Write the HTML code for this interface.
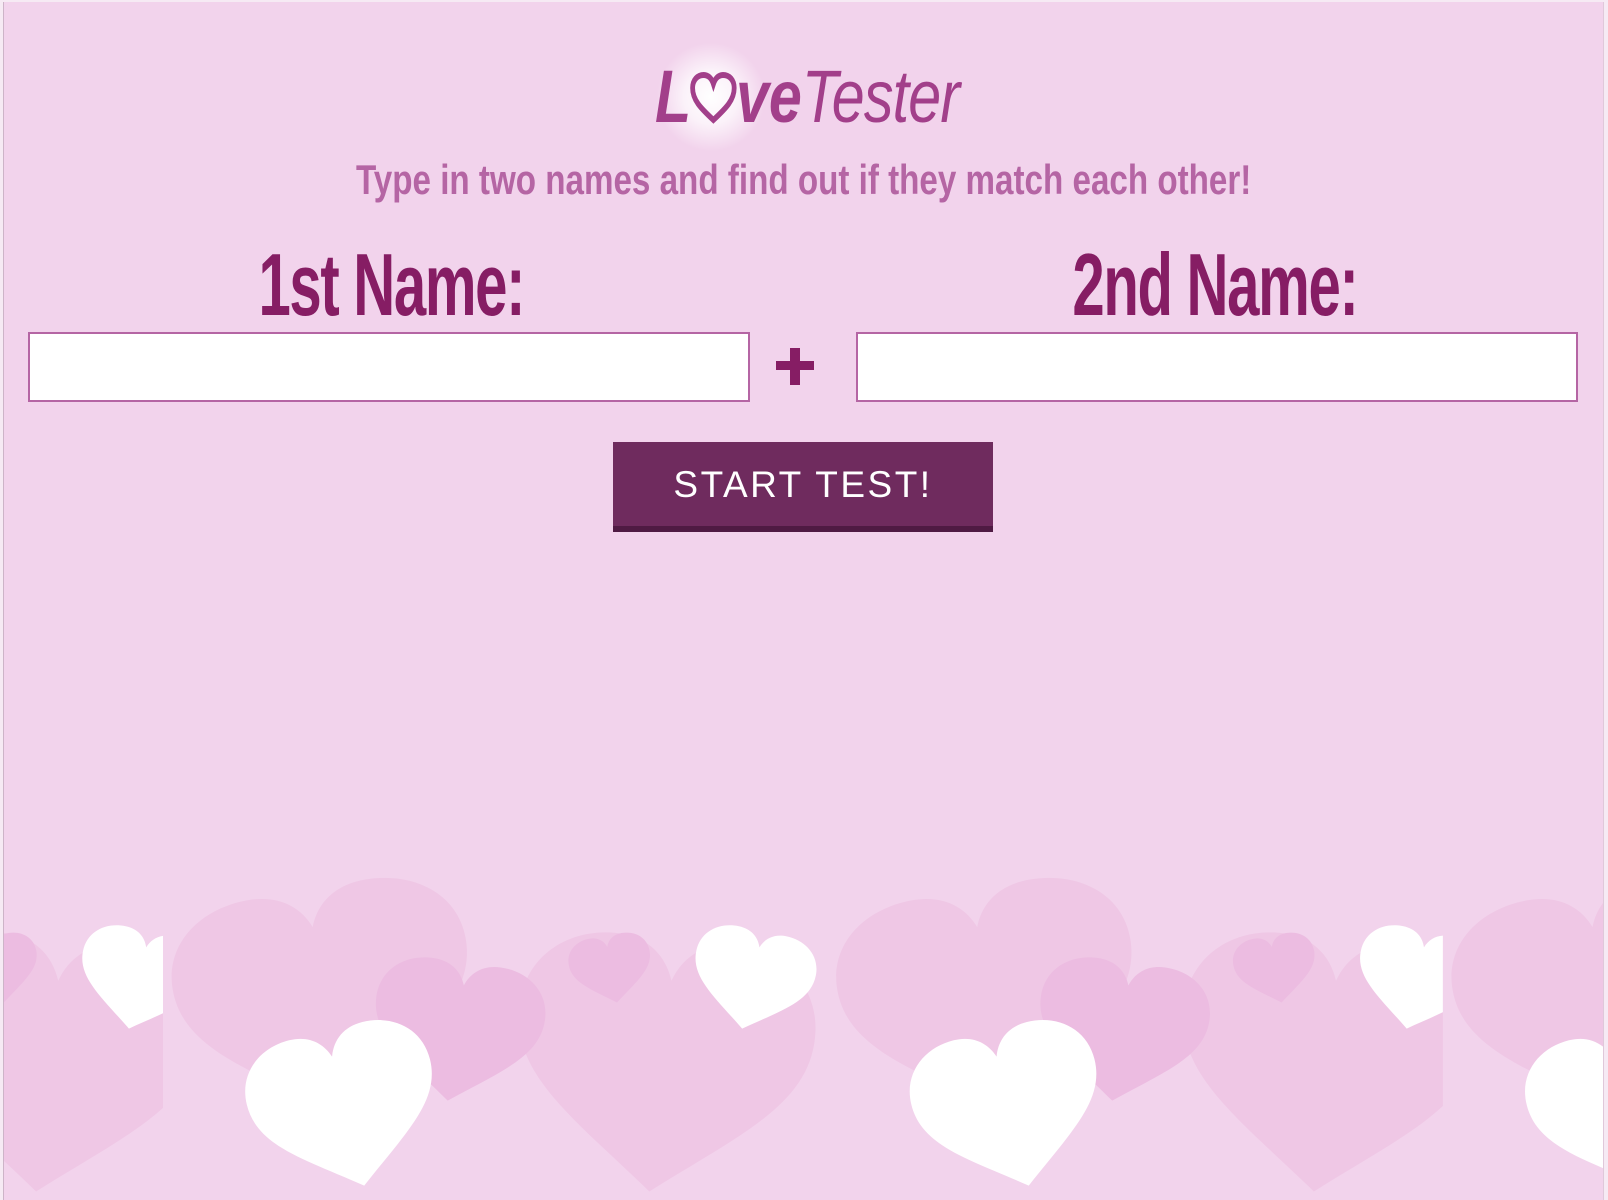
<!DOCTYPE html>
<html><head><meta charset="utf-8">
<style>
html,body{margin:0;padding:0;width:1608px;height:1200px;overflow:hidden;background:#f6eaf4}
#pg{position:absolute;left:3px;top:2px;width:1599px;height:1198px;background:#f2d3ec;border-left:1px solid #cdb4c8;border-right:1px solid #e0c8da;overflow:hidden}
.logo{position:absolute;left:651px;top:52px;height:80px;font-family:"Liberation Sans",sans-serif;color:#a23f8a;font-size:74px;white-space:nowrap;transform:scaleX(0.8);transform-origin:0 0}
.glow{position:absolute;left:652px;top:40px;width:110px;height:110px;border-radius:50%;background:radial-gradient(circle,#ffffff 0%,rgba(255,255,255,.7) 35%,rgba(255,255,255,0) 70%)}
.sub{position:absolute;left:0;width:1599px;top:154px;text-align:center;font-family:"Liberation Sans",sans-serif;font-weight:bold;color:#b565a4;font-size:42px}
.sub span{display:inline-block;transform:scaleX(0.79);white-space:nowrap}
.lab{position:absolute;top:232px;width:800px;text-align:center;font-family:"Liberation Sans",sans-serif;font-weight:bold;color:#861d64;font-size:88px;letter-spacing:-2px}
.lab span{display:inline-block;transform:scaleX(0.66);white-space:nowrap}
.inp{position:absolute;top:330px;height:66px;background:#fff;border:2px solid #b565a4}
.plus{position:absolute;left:771px;top:344px;width:40px;height:40px}
.btn{position:absolute;left:609px;top:440px;width:380px;height:84px;background:#6f2b5e;border-bottom:6px solid #4f1a43;color:#fff;font-family:"Liberation Sans",sans-serif;font-size:37px;letter-spacing:2.5px;text-align:center;line-height:86px}
svg.h{position:absolute;left:-3px;top:-2px}
</style></head><body>
<div id="pg">
<svg class="h" width="1608" height="1200" viewBox="0 0 1568 1170" preserveAspectRatio="none">
<defs>
<path id="hp" d="M50 97 C22 72 0 58 0 32 C0 12 14 0 30 0 C40 0 47 6 50 16 C53 6 60 0 70 0 C86 0 100 12 100 32 C100 58 78 72 50 97Z"/>
<g id="tile">
<use href="#hp" fill="#efc7e5" transform="translate(172 866) rotate(-10 145 112) scale(2.9 2.3)"/>
<use href="#hp" fill="#efc7e5" transform="translate(500 915) rotate(6 145 125) scale(2.9 2.55)"/>
<use href="#hp" fill="#ecbce1" transform="translate(362 938) rotate(8 83 68) scale(1.66 1.4)"/>
<use href="#hp" fill="#ecbce1" transform="translate(555 912) rotate(-10 40 33) scale(0.8 0.68)"/>
<use href="#hp" fill="#ffffff" transform="translate(673 907) rotate(12 60 50) scale(1.19 1.0)"/>
<use href="#hp" fill="#ffffff" transform="translate(244 1003) rotate(-14 92 80) scale(1.84 1.6)"/>
</g>
<clipPath id="cl"><rect x="0" y="0" width="158" height="1170"/></clipPath>
<clipPath id="cm"><rect x="158" y="0" width="1248" height="1170"/></clipPath>
<clipPath id="cr"><rect x="1406" y="0" width="200" height="1170"/></clipPath>
</defs>
<g clip-path="url(#cl)"><use href="#tile" transform="translate(-598 0)"/></g>
<g clip-path="url(#cm)"><use href="#tile"/><use href="#tile" transform="translate(648 0)"/></g>
<g clip-path="url(#cr)"><use href="#tile" transform="translate(1248 0)"/></g>
</svg>
<div class="glow"></div>
<div class="logo"><span style="font-weight:bold;font-style:italic">L</span><svg width="60" height="52" viewBox="0 0 60 52" style="vertical-align:-2px;margin:0 -2px"><path d="M30 48 C14 36 4 28 4 16 C4 8 10 3 18 3 C24 3 28 7 30 12 C32 7 36 3 42 3 C50 3 56 8 56 16 C56 28 46 36 30 48Z" fill="none" stroke="#a23f8a" stroke-width="6"/></svg><span style="font-weight:bold;font-style:italic">ve</span><span style="font-style:italic;font-weight:normal;letter-spacing:-1px">Tester</span></div>
<div class="sub"><span>Type in two names and find out if they match each other!</span></div>
<div class="lab" style="left:-13px"><span>1st Name:</span></div>
<div class="lab" style="left:811px"><span>2nd Name:</span></div>
<div class="inp" style="left:24px;width:718px"></div>
<div class="inp" style="left:852px;width:718px"></div>
<svg class="plus" viewBox="0 0 40 40"><path d="M15 2 H25 V15 H39 V24 H25 V39 H15 V24 H1 V15 H15Z" fill="#861d64"/></svg>
<div class="btn">START TEST!</div>
</div>
</body></html>
